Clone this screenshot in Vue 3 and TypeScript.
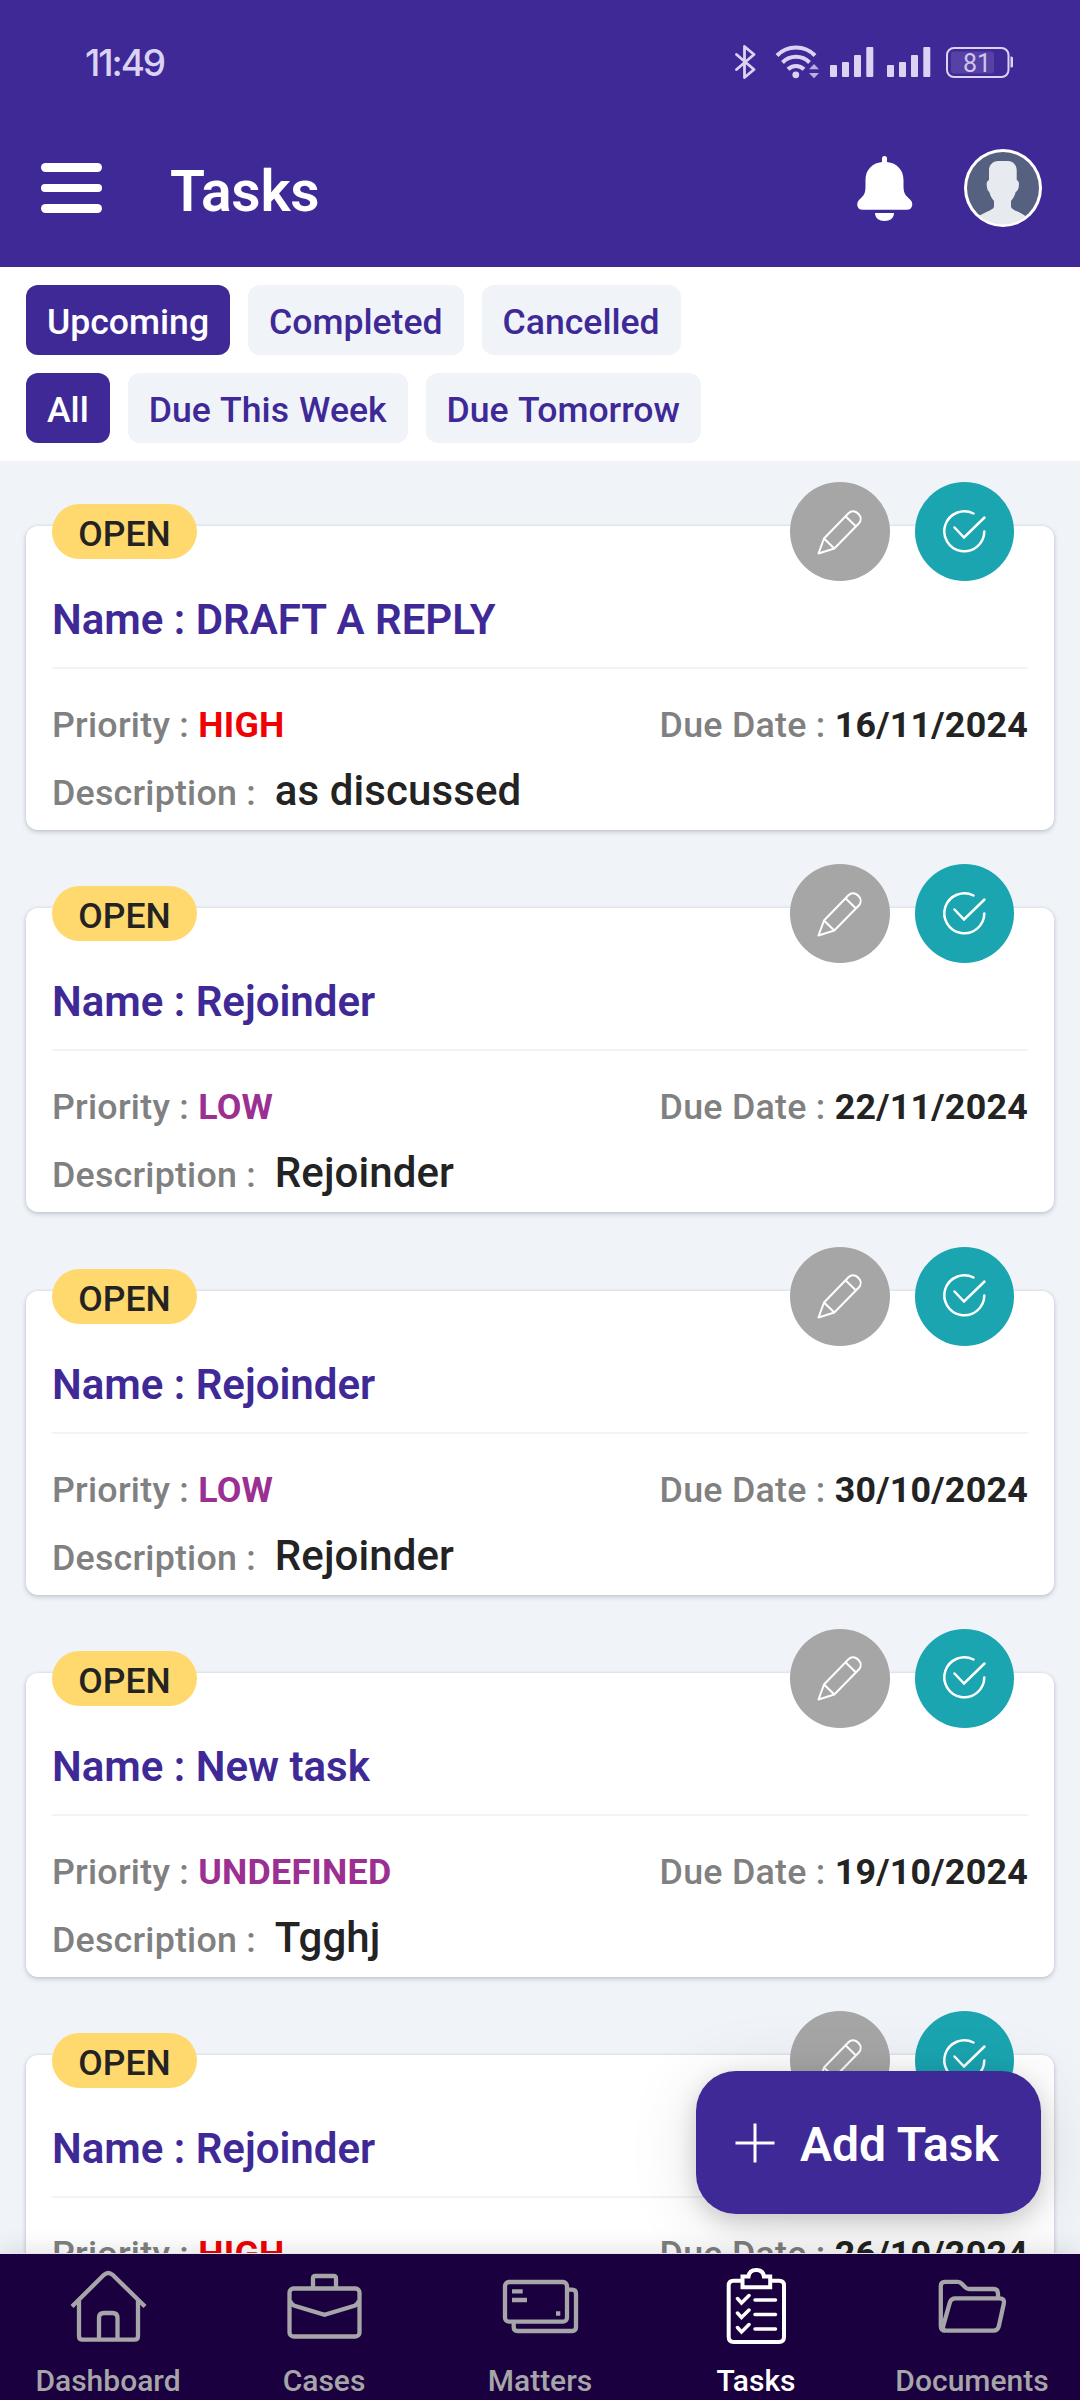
<script setup lang="ts">
import { ref } from 'vue'

interface Task {
  name: string
  priority: string
  due: string
  description: string
}

const statusFilters = ['Upcoming', 'Completed', 'Cancelled']
const dueFilters = ['All', 'Due This Week', 'Due Tomorrow']
const activeStatus = ref('Upcoming')
const activeDue = ref('All')
const activeTab = ref('Tasks')
const tabs = ['Dashboard', 'Cases', 'Matters', 'Tasks', 'Documents']

const tasks: Task[] = [
  { name: 'DRAFT A REPLY', priority: 'HIGH', due: '16/11/2024', description: 'as discussed' },
  { name: 'Rejoinder', priority: 'LOW', due: '22/11/2024', description: 'Rejoinder' },
  { name: 'Rejoinder', priority: 'LOW', due: '30/10/2024', description: 'Rejoinder' },
  { name: 'New task', priority: 'UNDEFINED', due: '19/10/2024', description: 'Tgghj' },
  { name: 'Rejoinder', priority: 'HIGH', due: '26/10/2024', description: 'Rejoinder' },
]
</script>

<template>
  <div class="screen">
    <header class="header">
      <div class="status">
        <span class="clock">11:49</span>
        <svg class="status-icons" width="280" height="36" viewBox="0 0 280 36">
          <g fill="none" stroke="#dcd3f4" stroke-width="2.8" stroke-linejoin="round" stroke-linecap="round">
            <path d="M1.5 10.5 19 25.5 9.5 33.5V2.5L19 10.500 1.500 25.500" />
          </g>
          <g fill="none" stroke="#dcd3f4" stroke-width="4">
            <path d="M42 11.500a26.500 26.500 0 0 1 38 0" />
            <path d="M47.500 18.500a19 19 0 0 1 27 0" />
            <path d="M53 25.200a11.500 11.500 0 0 1 16 0" />
          </g>
          <circle cx="60.800" cy="30.800" r="3.400" fill="#dcd3f4" />
          <path d="M74 25.200 79 20l5 5.200zM74 29h10l-5 5.200z" fill="#b9aee0" />
          <g fill="#dcd3f4">
            <template v-for="x in [95, 152]" :key="x">
              <rect :x="x" y="21" width="7" height="12" rx="1" />
              <rect :x="x + 12" y="18" width="7" height="15" rx="1" />
              <rect :x="x + 24" y="11" width="7" height="22" rx="1" />
              <rect :x="x + 36.300" y="3" width="7" height="30" rx="1" />
            </template>
          </g>
          <rect x="212" y="4" width="61.500" height="29" rx="7" fill="none" stroke="#dcd3f4" stroke-width="2" />
          <rect x="216" y="7.500" width="43" height="22" rx="3" fill="#5641a4" />
          <path d="M275.500 12.500h1a1.500 1.500 0 0 1 1.500 1.500v8a1.500 1.500 0 0 1-1.500 1.500h-1z" fill="#dcd3f4" />
          <text x="242" y="27.500" text-anchor="middle" class="battery">81</text>
        </svg>
      </div>
      <div class="toolbar">
        <button class="burger" aria-label="Menu"><i /><i /><i /></button>
        <h1>Tasks</h1>
        <svg class="bell" width="70" height="76" viewBox="0 0 70 76" fill="#fff">
          <path d="M32 12V8.500a2.500 2.500 0 0 1 5 0V12C47 13 53.500 20 53.500 30v6c0 6 1.500 9 5 12l2 2c2 2 2 4.500 1.500 6.200-.8 2.500-2.500 3.500-5 3.500H12.500c-2.500 0-4.300-1-5-3.500-.6-2-.2-4.200 1.500-6.200l2-2c3.500-3 4.500-6 4.500-12v-6c0-10 6.500-17 16.500-18z" />
          <path d="M25 63h19c0 5-4 8-9.500 8S25 68 25 63z" />
        </svg>
        <svg class="avatar" width="78" height="78" viewBox="0 0 78 78">
          <defs><clipPath id="face"><circle cx="39" cy="39" r="36.500" /></clipPath></defs>
          <circle cx="39" cy="39" r="39" fill="#fff" />
          <circle cx="39" cy="39" r="36" fill="#566080" />
          <path clip-path="url(#face)" fill="#e7eaee" d="M34 12h10c5 0 8.700 4 8.700 9v10c2.300 1 2.600 3 2 7-.5 3-1.500 4-3 5-1 4-2.500 6-4.700 9v6c1 3 11 6 15 9.500V78H14V67.500C19 64 29 61 30 58v-6c-2.200-3-3.700-5-4.700-9-1.500-1-2.200-3-2.500-6-.4-3 0-5 2.200-6V21c0-5 4-9 9-9z" />
        </svg>
      </div>
    </header>

    <section class="filters">
      <div class="chips">
        <button v-for="f in statusFilters" :key="f" class="chip" :class="{ on: f === activeStatus }" @click="activeStatus = f">{{ f }}</button>
      </div>
      <div class="chips">
        <button v-for="f in dueFilters" :key="f" class="chip" :class="{ on: f === activeDue }" @click="activeDue = f">{{ f }}</button>
      </div>
    </section>

    <main class="list">
      <article v-for="(t, i) in tasks" :key="i" class="card">
        <span class="badge">OPEN</span>
        <div class="actions">
          <button class="round edit" aria-label="Edit">
            <svg width="50" height="50" viewBox="0 0 50 50" fill="none" stroke="#fff" stroke-width="2" stroke-linejoin="round">
              <path d="M3.500 46.500 9 31.500 33.500 6.200c3-3 7-2.200 9.800.600 2.800 2.800 3.300 6.700.500 9.700L19.300 41.500zM9 31.500l10.300 10M30.500 9.200 41 19.500" />
            </svg>
          </button>
          <button class="round done" aria-label="Complete">
            <svg width="50" height="50" viewBox="0 0 50 50" fill="none" stroke="#fff" stroke-width="2.500" stroke-linecap="round">
              <path d="M34.500 6.500A20 20 0 1 0 45.300 24.500" />
              <path d="m15.500 20.500 9.500 10 20.500-20" />
            </svg>
          </button>
        </div>
        <h2>Name : {{ t.name }}</h2>
        <div class="row">
          <span>Priority : <b :class="{ high: t.priority === 'HIGH' }" class="priority">{{ t.priority }}</b></span>
          <span>Due Date : <b>{{ t.due }}</b></span>
        </div>
        <div class="desc"><span>Description :</span><p>{{ t.description }}</p></div>
      </article>
    </main>

    <button class="fab">
      <svg width="40" height="40" viewBox="0 0 40 40" stroke="#fff" stroke-width="3"><path d="M20 .500v39M.500 20h39" /></svg>
      <span>Add Task</span>
    </button>

    <nav class="nav">
      <a v-for="tab in tabs" :key="tab" :class="{ on: tab === activeTab }" @click="activeTab = tab">
        <svg width="100" height="90" viewBox="0 0 100 90" fill="none" stroke="currentColor" stroke-width="4.300">
          <g v-if="tab === 'Dashboard'">
            <path d="M14 44.500 46 12.800q4.300-3.800 8.600 0L87 44.500" />
            <path d="M21 38v36q0 3.700 3.700 3.700h51.600q3.700 0 3.700-3.700V38" />
            <path d="M41 77V56q0-5 5-5h8.500q5 0 5 5v21" />
          </g>
          <g v-else-if="tab === 'Cases'">
            <rect x="15.500" y="26.500" width="70" height="48" rx="4" />
            <path d="M39 26V16.500q0-2.500 2.500-2.500h18q2.500 0 2.500 2.500V26M16 38.500q1 4 4.500 5.200l30 9 30-9q3.500-1.200 4.500-5.200" />
          </g>
          <g v-else-if="tab === 'Matters'">
            <rect x="15" y="20" width="62" height="39.700" rx="4" />
            <path d="M78 27.700h4q4 0 4 4V65q0 4-4 4H27.700q-4 0-4-4v-4M22 29.300h10.700M22 38h15M66 51.500h4.300" />
          </g>
          <g v-else-if="tab === 'Tasks'" stroke-width="4">
            <path d="M36 18.700h-8.500q-4.800 0-4.800 4.800V75q0 5 5 5H73q5 0 5-5V23.500q0-4.800-4.800-4.800H65" />
            <path d="M36.500 14.500h6q.8-6.500 7.700-6.500t7.700 6.500h6.300V25.300H36.500z" />
            <path v-for="y in [0, 14.5, 29]" :key="y" :transform="`translate(0 ${y})`" stroke-width="3.500" stroke-linecap="round" d="m31.500 36.500 4 4.500 7.500-7.500M49 38h20.500" />
          </g>
          <g v-else stroke-linejoin="round">
            <path d="M76 36v-4.500q0-4.500-4.500-4.500H47q-2 0-3.500-1.500l-4-4q-1.700-1.700-4-1.700H23q-4.200 0-4.200 4.200V64q0 4.700 4.700 4.700" />
            <path d="M33.500 36.300h44q5.500 0 4.300 5.500l-5 22.500q-1 4.400-5.500 4.400H25q-5 0-3.700-5l6.500-23q1.200-4.400 5.700-4.400z" />
          </g>
        </svg>
        <span>{{ tab }}</span>
      </a>
    </nav>
  </div>
</template>

<style>
body { margin: 0; }
</style>

<style scoped>
.screen {
  position: relative;
  display: flex;
  flex-direction: column;
  width: 1080px;
  height: 2400px;
  overflow: hidden;
  background: #f0f4f9;
  font-family: Roboto, "Liberation Sans", sans-serif;
  color: #232323;
}
button { border: 0; padding: 0; background: none; font: inherit; color: inherit; }
svg { display: block; flex: none; }
h1, h2, p { margin: 0; font-weight: 500; }

.header { flex: none; height: 267px; background: #3f2997; }
.status {
  display: flex;
  justify-content: space-between;
  align-items: center;
  height: 124px;
  padding: 0 65px 0 85px;
}
.clock { font: 500 37px/44px Inter, sans-serif; letter-spacing: -2.1px; color: #dcd3f4; padding-top: 1px; }
.battery { font: 400 25px Roboto, sans-serif; fill: #cfc5ec; }
.toolbar { display: flex; align-items: center; height: 128px; padding: 0 38px 0 41px; }
.burger { display: flex; flex-direction: column; gap: 12.300px; width: 61px; }
.burger i { height: 8.300px; border-radius: 5px; background: #fff; }
h1 { flex: 1; margin-left: 68px; padding-top: 8px; font-size: 57px; font-weight: 650; line-height: 66px; letter-spacing: -.2px; color: #fff; }
.bell { margin-right: 44px; }

.filters { flex: none; display: flex; flex-direction: column; gap: 18px; padding: 18px 26px; background: #fff; }
.chips { display: flex; gap: 18px; }
.chip {
  height: 70px;
  padding: 3px 21px 0;
  border-radius: 12px;
  background: #f0f4f9;
  color: #3f2997;
  font-size: 35.600px;
  font-weight: 550;
  word-spacing: 1.300px;
  line-height: 42px;
}
.chip.on { background: #3f2997; color: #fff; }

.list { flex: 1; min-height: 0; display: flex; flex-direction: column; gap: 78.250px; padding: 65px 26px 0; overflow: hidden; }
.card {
  position: relative;
  flex: none;
  box-sizing: border-box;
  height: 304px;
  padding: 69px 26px 0;
  border-radius: 12px;
  background: #fff;
  box-shadow: 0 2px 5px rgba(40, 50, 70, .22), 0 0 3px rgba(40, 50, 70, .1);
}
.badge {
  position: absolute;
  top: -22px;
  left: 26px;
  box-sizing: border-box;
  width: 145px;
  height: 55px;
  border-radius: 28px;
  background: #ffd86e;
  text-align: center;
  font-size: 35.500px;
  font-weight: 550;
  line-height: 60px;
}
.actions { position: absolute; top: -44px; right: 40px; display: flex; gap: 25px; }
.round { display: flex; align-items: center; justify-content: center; width: 99.500px; height: 99px; border-radius: 50%; }
.edit { background: #a6a6a6; }
.done { background: #1aa5b1; }
h2 { padding-bottom: 22px; border-bottom: 2px solid #f0f3f9; font-size: 42px; font-weight: 600; line-height: 50px; color: #3f2997; }
.row { display: flex; justify-content: space-between; margin-top: 35px; font-size: 35.800px; font-weight: 500; letter-spacing: .25px; line-height: 42px; color: #808080; }
.row b { font-weight: 700; color: #232323; }
.row .priority { color: #9b2f92; }
.row .priority.high { color: #f00000; }
.desc { display: flex; align-items: baseline; gap: 19px; margin-top: 20px; font-size: 35.800px; font-weight: 500; letter-spacing: .2px; line-height: 50px; color: #808080; }
.desc p { font-size: 42px; font-weight: 500; letter-spacing: .1px; color: #232323; }

.fab {
  position: absolute;
  top: 2071px;
  left: 696px;
  display: flex;
  align-items: center;
  gap: 25px;
  width: 345px;
  height: 143px;
  padding-left: 39px;
  border-radius: 40px;
  background: #3f2997;
  box-shadow: 0 8px 22px rgba(0, 0, 0, .16), 0 8px 70px rgba(0, 0, 0, .12);
  color: #fff;
  font-size: 48px;
  font-weight: 650;
}
.fab span { padding-top: 4px; white-space: nowrap; }

.nav {
  position: relative;
  flex: none;
  display: flex;
  height: 146px;
  background: #1b003f;
  box-shadow: 0 -1px 0 #e6e6e8, 0 -3px 24px rgba(0, 0, 0, .12);
  color: #a6a5a8;
}
.nav a { flex: 1; display: flex; flex-direction: column; align-items: center; padding-top: 8px; font-size: 30px; font-weight: 500; line-height: 36px; }
.nav span { margin-top: 11px; }
.nav .on { color: #fff; }
</style>
